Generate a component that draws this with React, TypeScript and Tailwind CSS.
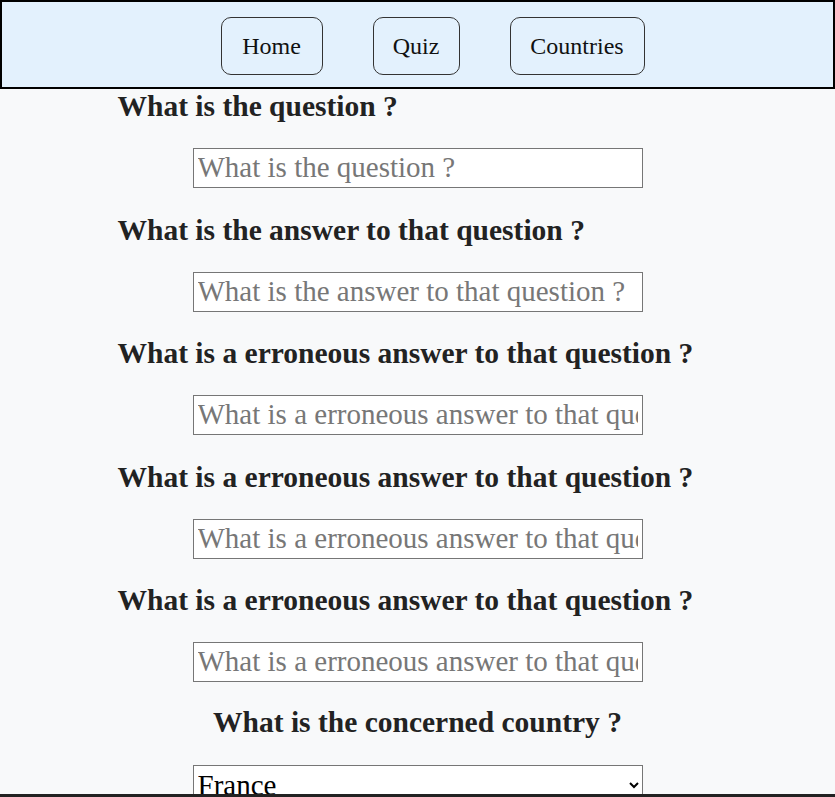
import { useState } from "react";

const FONT = { fontFamily: '"Liberation Serif", "DejaVu Serif", serif' };

function NavButton({ label, width }: { label: string; width: string }) {
  return (
    <button
      type="button"
      className={`h-[58px] rounded-[10px] border border-[#333] bg-[#e3f1fd] text-[24px] text-[#111] ${width}`}
    >
      {label}
    </button>
  );
}

function Field({ label, placeholder }: { label: string; placeholder: string }) {
  return (
    <div className="flex flex-col">
      <label className="text-[29.5px] font-bold leading-[30px] text-[#222]">{label}</label>
      <input
        className="ml-[75px] mt-[27px] mb-[26.5px] h-[40px] w-[450px] border border-[#767676] bg-white px-[4px] text-[29px] text-black outline-none placeholder:text-[#777]"
        placeholder={placeholder}
        style={FONT}
      />
    </div>
  );
}

export default function App() {
  const [country, setCountry] = useState("France");
  const wrong = "What is a erroneous answer to that question ?";

  return (
    <div className="min-h-[797px] bg-[#f8f9fa]" style={FONT}>
      <header className="flex h-[89px] items-center justify-center gap-[50px] border-2 border-black bg-[#e3f1fd] pl-[30px] pt-[2px]">
        <NavButton label="Home" width="w-[102px]" />
        <NavButton label="Quiz" width="w-[87px]" />
        <NavButton label="Countries" width="w-[135px]" />
      </header>

      <form className="mx-auto w-[600px] pt-[2px]">
        <Field label="What is the question ?" placeholder="What is the question ?" />
        <Field
          label="What is the answer to that question ?"
          placeholder="What is the answer to that question ?"
        />
        <Field label={wrong} placeholder={wrong} />
        <Field label={wrong} placeholder={wrong} />
        <Field label={wrong} placeholder={wrong} />

        <div className="flex flex-col items-center">
          <label className="-mt-[2px] text-[29.5px] font-bold leading-[30px] text-[#222]">
            What is the concerned country ?
          </label>
          <select
            value={country}
            onChange={(e) => setCountry(e.target.value)}
            className="mt-[28px] h-[40px] w-[450px] border border-[#767676] bg-white text-[29px] text-black"
            style={FONT}
          >
            <option>France</option>
            <option>Germany</option>
            <option>Spain</option>
            <option>Italy</option>
          </select>
        </div>
      </form>

      <div className="fixed bottom-0 left-0 h-[3px] w-full bg-[#222]" />
    </div>
  );
}
